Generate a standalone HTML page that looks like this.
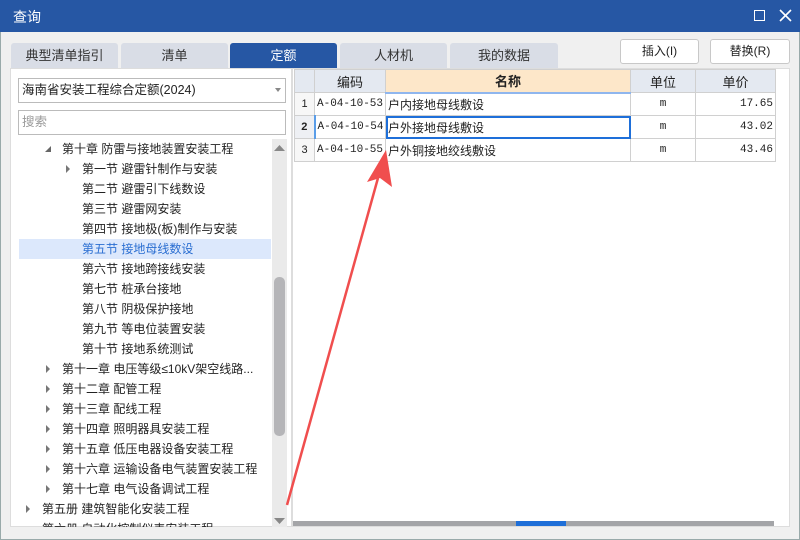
<!DOCTYPE html>
<html><head><meta charset="utf-8"><style>
*{margin:0;padding:0;box-sizing:border-box}
body{width:800px;height:540px;overflow:hidden;background:#f0f0f0;font-family:"Liberation Sans","Noto Sans CJK SC",sans-serif;font-size:12px;color:#222;position:relative}
.abs{position:absolute}
.title{left:0;top:0;width:800px;height:32px;background:#2657a4;color:#fff;font-size:14px;line-height:34px;padding-left:13px}
.tab{top:43px;height:25px;background:#d9dde6;border-radius:3px 3px 0 0;text-align:center;line-height:25px;font-size:13px;color:#333}
.tab.on{background:#2657a4;color:#fff}
.btn{top:39px;height:25px;background:#fff;border:1px solid #c8c8c8;border-radius:3px;text-align:center;line-height:23px;font-size:12px}
.tree div{position:absolute;height:20px;line-height:20px;white-space:nowrap;font-size:12px}
table{border-collapse:collapse;position:absolute;left:294px;top:69px;table-layout:fixed;width:481px}
td{border:1px solid #d0d0d0;height:23px;font-size:12px;padding:0 2px;white-space:nowrap;overflow:hidden}
th{border:1px solid #d0d0d0;height:23px;background:#e4e9f1;font-weight:normal;font-size:13px}
.mono{font-family:"Liberation Mono","Noto Sans CJK SC",monospace;font-size:11px}
</style></head><body>
<div class="abs title">查询</div>
<div class="abs" style="left:754px;top:10px;width:11px;height:11px;border:1.5px solid #fff"></div>
<svg class="abs" style="left:779px;top:9px" width="13" height="13"><path d="M1 1L12 12M12 1L1 12" stroke="#fff" stroke-width="1.6"/></svg>
<div class="abs" style="left:0;top:32px;width:1px;height:508px;background:#9aa"></div>
<div class="abs" style="right:0;top:32px;width:1px;height:508px;background:#9aa"></div>
<div class="abs" style="left:0;bottom:0;width:800px;height:1px;background:#9aa"></div>

<div class="abs tab" style="left:11px;width:107px">典型清单指引</div>
<div class="abs tab" style="left:121px;width:107px">清单</div>
<div class="abs tab on" style="left:230px;width:107px">定额</div>
<div class="abs tab" style="left:340px;width:107px">人材机</div>
<div class="abs tab" style="left:450px;width:108px">我的数据</div>
<div class="abs btn" style="left:620px;width:79px">插入(I)</div>
<div class="abs btn" style="left:710px;width:80px">替换(R)</div>

<div class="abs" style="left:10px;top:68px;width:282px;height:459px;background:#fff;border:1px solid #ddd"></div>
<div class="abs" style="left:18px;top:78px;width:268px;height:25px;border:1px solid #bbb;background:#fff;line-height:23px;padding-left:3px;font-size:12.5px">海南省安装工程综合定额(2024)</div>
<div class="abs" style="left:275px;top:88px;width:0;height:0;border-left:3px solid transparent;border-right:3px solid transparent;border-top:4px solid #888"></div>
<div class="abs" style="left:18px;top:110px;width:268px;height:25px;border:1px solid #bbb;background:#fff;line-height:23px;padding-left:3px;color:#999;font-size:12.5px">搜索</div>

<div class="abs" style="left:19px;top:239px;width:252px;height:20px;background:#dce8fc"></div>
<div class="abs tree" style="left:0;top:0;width:272px;height:527px;overflow:hidden">
<div style="left:62px;top:139px">第十章 防雷与接地装置安装工程</div>
<div style="left:82px;top:159px">第一节 避雷针制作与安装</div>
<div style="left:82px;top:179px">第二节 避雷引下线数设</div>
<div style="left:82px;top:199px">第三节 避雷网安装</div>
<div style="left:82px;top:219px">第四节 接地极(板)制作与安装</div>
<div style="left:82px;top:239px;color:#2a6ed1">第五节 接地母线数设</div>
<div style="left:82px;top:259px">第六节 接地跨接线安装</div>
<div style="left:82px;top:279px">第七节 桩承台接地</div>
<div style="left:82px;top:299px">第八节 阴极保护接地</div>
<div style="left:82px;top:319px">第九节 等电位装置安装</div>
<div style="left:82px;top:339px">第十节 接地系统测试</div>
<div style="left:62px;top:359px">第十一章 电压等级≤10kV架空线路...</div>
<div style="left:62px;top:379px">第十二章 配管工程</div>
<div style="left:62px;top:399px">第十三章 配线工程</div>
<div style="left:62px;top:419px">第十四章 照明器具安装工程</div>
<div style="left:62px;top:439px">第十五章 低压电器设备安装工程</div>
<div style="left:62px;top:459px">第十六章 运输设备电气装置安装工程</div>
<div style="left:62px;top:479px">第十七章 电气设备调试工程</div>
<div style="left:42px;top:499px">第五册 建筑智能化安装工程</div>
<div style="left:42px;top:519px">第六册 自动化控制仪表安装工程</div>
</div>
<svg class="abs" style="left:0;top:0" width="290" height="527">
<path d="M45 152L51 146L51 152Z" fill="#666"/>
<g fill="#777"><path d="M66 165L70 169L66 173Z"/>
<path d="M46 365L50 369L46 373Z"/><path d="M46 385L50 389L46 393Z"/><path d="M46 405L50 409L46 413Z"/><path d="M46 425L50 429L46 433Z"/><path d="M46 445L50 449L46 453Z"/><path d="M46 465L50 469L46 473Z"/><path d="M46 485L50 489L46 493Z"/><path d="M26 505L30 509L26 513Z"/></g>
</svg>
<div class="abs" style="left:272px;top:139px;width:15px;height:388px;background:#eaeaea"></div>
<div class="abs" style="left:274px;top:277px;width:11px;height:159px;background:#b5b5b8;border-radius:5px"></div>
<svg class="abs" style="left:274px;top:145px" width="11" height="6"><path d="M0 6L5.5 0L11 6Z" fill="#888"/></svg>
<svg class="abs" style="left:274px;top:518px" width="11" height="6"><path d="M0 0L5.5 6L11 0Z" fill="#888"/></svg>

<div class="abs" style="left:292px;top:68px;width:498px;height:459px;background:#fff;border:1px solid #ddd"></div>
<table>
<colgroup><col style="width:20px"><col style="width:71px"><col style="width:245px"><col style="width:65px"><col style="width:80px"></colgroup>
<tr><th></th><th>编码</th><th style="background:#fde7c9;font-weight:bold;border-bottom:2px solid #8fb6ee">名称</th><th>单位</th><th>单价</th></tr>
<tr><td style="background:#f7f7f7;text-align:center;font-size:11px">1</td><td class="mono">A-04-10-53</td><td>户内接地母线敷设</td><td class="mono" style="text-align:center">m</td><td class="mono" style="text-align:right">17.65</td></tr>
<tr><td style="background:#eef0f4;text-align:center;font-weight:bold;font-size:11px;border-right:2px solid #5a9de8">2</td><td class="mono">A-04-10-54</td><td style="outline:2px solid #1e6fd9;outline-offset:-2px">户外接地母线敷设</td><td class="mono" style="text-align:center">m</td><td class="mono" style="text-align:right">43.02</td></tr>
<tr><td style="background:#f7f7f7;text-align:center;font-size:11px">3</td><td class="mono">A-04-10-55</td><td>户外铜接地绞线敷设</td><td class="mono" style="text-align:center">m</td><td class="mono" style="text-align:right">43.46</td></tr>
</table>
<div class="abs" style="left:293px;top:521px;width:481px;height:5px;background:#a4a5a8"></div>
<div class="abs" style="left:516px;top:521px;width:50px;height:5px;background:#1f6fd8"></div>

<svg class="abs" style="left:0;top:0" width="800" height="540">
<path d="M287 505L378 178" stroke="#f04e4e" stroke-width="2.5"/>
<path d="M386 150L392 187L380 178L367 182Z" fill="#f04e4e"/>
</svg>
</body></html>
